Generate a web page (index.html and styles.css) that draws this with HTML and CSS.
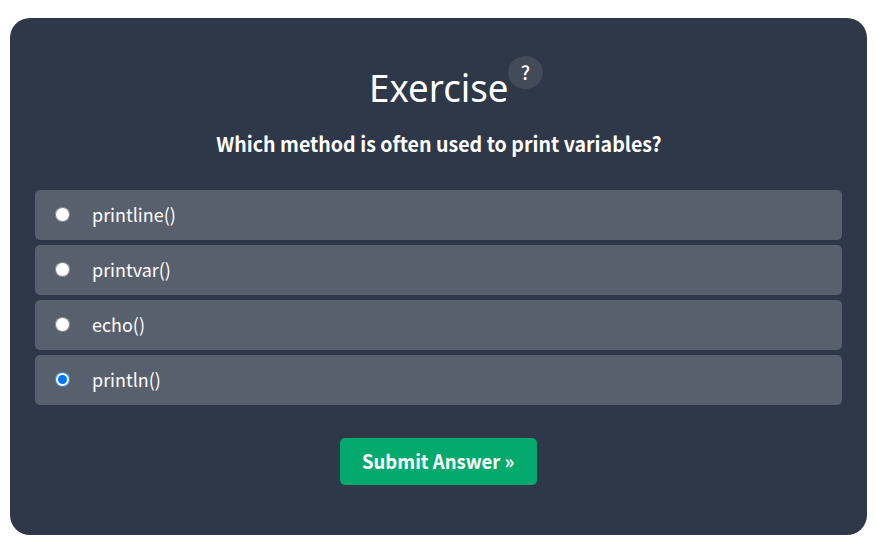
FILE: index.html
```html
<!DOCTYPE html>
<html lang="en">
<head>
<meta charset="utf-8">
<title>Exercise</title>
<link rel="stylesheet" href="styles.css">
</head>
<body>
<main class="exercise">
  <h1 class="title"><span class="title-text">Exercise</span><span class="help">?</span></h1>
  <p class="question">Which method is often used to print variables?</p>
  <form class="options">
    <label class="option"><input type="radio" name="answer"><span>printline()</span></label>
    <label class="option"><input type="radio" name="answer"><span>printvar()</span></label>
    <label class="option"><input type="radio" name="answer"><span>echo()</span></label>
    <label class="option"><input type="radio" name="answer" checked><span>println()</span></label>
  </form>
  <button class="submit" type="button"><span>Submit Answer »</span></button>
</main>
</body>
</html>
```
FILE: styles.css
```css
* { box-sizing: border-box; }
body { margin: 0; background: #fff; font-family: "Noto Sans CJK SC", sans-serif; color: #fff; }
.exercise {
  margin: 18px 9px 0 10px;
  height: 517px;
  padding: 38px 25px 0;
  border-radius: 20px;
  background: #2f3848;
  display: flex;
  flex-direction: column;
  align-items: center;
}
.title {
  margin: 0;
  height: 64px;
  display: flex;
  align-items: flex-start;
  padding-left: 35px;
  font: 300 39px/62px "Noto Sans", sans-serif;
}
.title-text {
  width: 139px;
  white-space: nowrap;
  font-weight: 400;
  transform: scaleX(.94);
  transform-origin: left;
}
.help {
  width: 35px;
  height: 33px;
  border-radius: 50%;
  background: #434b59;
  text-align: center;
  font: 500 19px/32px "Noto Sans CJK SC", sans-serif;
}
.question {
  margin: 5px 0 0;
  font-size: 20.5px;
  font-weight: 700;
  line-height: 36px;
  transform: scaleX(.956);
}
.options { width: 100%; margin-top: 29px; display: grid; gap: 5px; }
.option {
  height: 50px;
  padding-left: 20px;
  border-radius: 5px;
  background: #58606d;
  display: flex;
  align-items: center;
  font-size: 18.5px;
  line-height: 48px;
}
.option span { margin-bottom: 2px; transform: scaleX(.97); transform-origin: left; }
.option input { width: 15px; height: 15px; margin: 0 21.5px 2px 0; }
.submit {
  margin-top: 33px;
  width: 197px;
  height: 47px;
  padding: 0 0 2px;
  border: 0;
  border-radius: 5px;
  background: #04aa6d;
  color: #fff;
  font: 700 19.5px/45px "Noto Sans CJK SC", sans-serif;
}
.submit span { display: inline-block; transform: scaleX(.95); }
```
